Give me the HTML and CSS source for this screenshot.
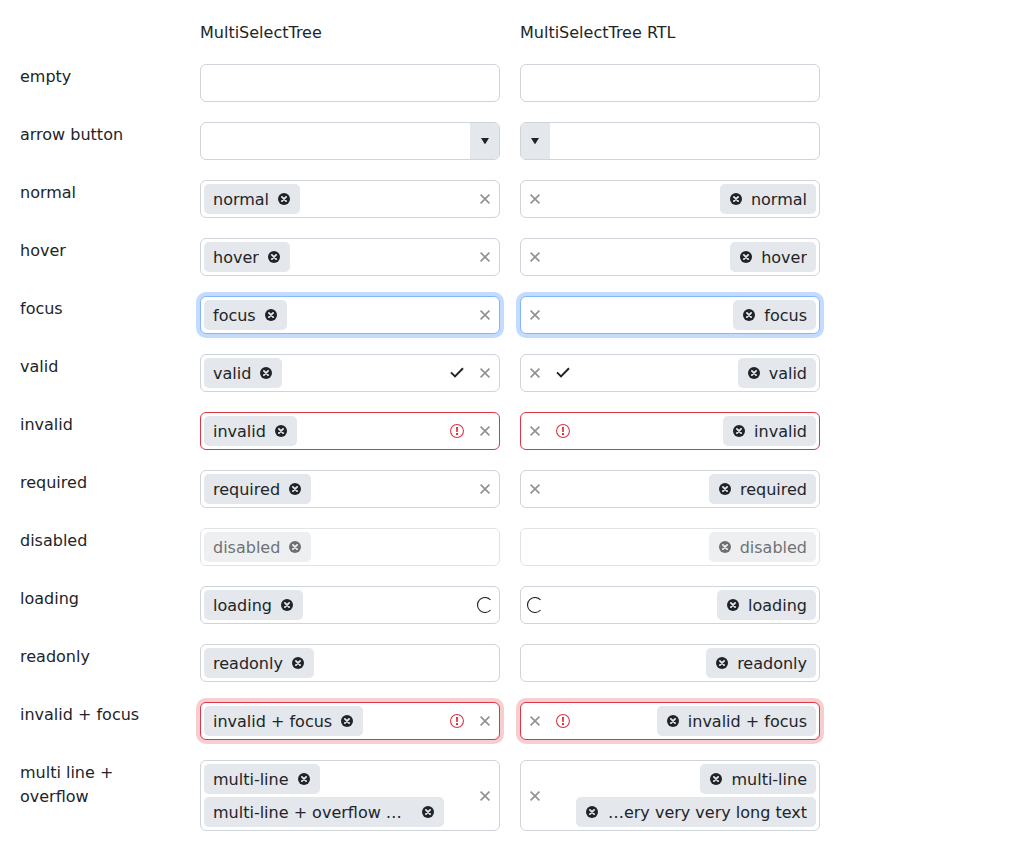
FILE: index.html
```html
<!DOCTYPE html>
<html lang="en">
<head>
<meta charset="utf-8">
<title>MultiSelectTree</title>
<link rel="stylesheet" href="styles.css">
</head>
<body>
<svg class="sprite" aria-hidden="true">
  <symbol id="remove" viewBox="0 0 12 12"><circle cx="6" cy="6" r="6" fill="currentColor"/><path d="M3.9 3.9l4.2 4.2M8.1 3.9l-4.2 4.2" stroke="#e4e7eb" stroke-width="1.9" stroke-linecap="round"/></symbol>
  <symbol id="clear" viewBox="0 0 10 10"><path d="M0.6 0.6l8.8 8.8M9.4 0.6l-8.8 8.8" stroke="currentColor" stroke-width="1.7"/></symbol>
  <symbol id="arrow" viewBox="0 0 8 6"><path d="M0 0h8L4.6 5.5q-.6.8-1.2 0z" fill="currentColor"/></symbol>
  <symbol id="check" viewBox="0 0 14 14"><path d="M1 6.4l4 4L13 2.2" fill="none" stroke="currentColor" stroke-width="2"/></symbol>
  <symbol id="alert" viewBox="0 0 14 14"><circle cx="7" cy="7" r="6.45" fill="none" stroke="currentColor" stroke-width="1.1"/><path d="M6 3h2l-.2 5H6.200zM6 9h2v2H6z" fill="currentColor"/></symbol>
  <symbol id="spinner" viewBox="0 0 16 16"><path d="M13.6 3A7.500 7.500 0 1 0 13.6 13" fill="none" stroke="currentColor" stroke-width="1.1"/></symbol>
</svg>
<main class="grid">
  <div class="heading heading-first">MultiSelectTree</div>
  <div class="heading">MultiSelectTree RTL</div>

  <label class="label" for="empty">empty</label>
  <div class="field"><div class="items"><input class="input" id="empty"></div></div>
  <div class="field" dir="rtl"><div class="items"><input class="input" aria-label="empty RTL"></div></div>

  <label class="label" for="arrow-button">arrow button</label>
  <div class="field"><div class="items"><input class="input" id="arrow-button"></div><button class="toggle" aria-label="Open"><svg class="icon-arrow"><use href="#arrow"/></svg></button></div>
  <div class="field" dir="rtl"><div class="items"><input class="input" aria-label="arrow button RTL"></div><button class="toggle" aria-label="Open"><svg class="icon-arrow"><use href="#arrow"/></svg></button></div>

  <label class="label" for="normal">normal</label>
  <div class="field"><div class="items"><span class="chip"><span class="chip-text">normal</span><button class="remove" aria-label="Remove"><svg class="icon-remove"><use href="#remove"/></svg></button></span><input class="input" id="normal"></div><button class="clear" aria-label="Clear"><svg class="icon-clear"><use href="#clear"/></svg></button></div>
  <div class="field" dir="rtl"><div class="items"><span class="chip"><span class="chip-text">normal</span><button class="remove" aria-label="Remove"><svg class="icon-remove"><use href="#remove"/></svg></button></span><input class="input" aria-label="normal RTL"></div><button class="clear" aria-label="Clear"><svg class="icon-clear"><use href="#clear"/></svg></button></div>

  <label class="label" for="hover">hover</label>
  <div class="field"><div class="items"><span class="chip"><span class="chip-text">hover</span><button class="remove" aria-label="Remove"><svg class="icon-remove"><use href="#remove"/></svg></button></span><input class="input" id="hover"></div><button class="clear" aria-label="Clear"><svg class="icon-clear"><use href="#clear"/></svg></button></div>
  <div class="field" dir="rtl"><div class="items"><span class="chip"><span class="chip-text">hover</span><button class="remove" aria-label="Remove"><svg class="icon-remove"><use href="#remove"/></svg></button></span><input class="input" aria-label="hover RTL"></div><button class="clear" aria-label="Clear"><svg class="icon-clear"><use href="#clear"/></svg></button></div>

  <label class="label" for="focus">focus</label>
  <div class="field focused"><div class="items"><span class="chip"><span class="chip-text">focus</span><button class="remove" aria-label="Remove"><svg class="icon-remove"><use href="#remove"/></svg></button></span><input class="input" id="focus"></div><button class="clear" aria-label="Clear"><svg class="icon-clear"><use href="#clear"/></svg></button></div>
  <div class="field focused" dir="rtl"><div class="items"><span class="chip"><span class="chip-text">focus</span><button class="remove" aria-label="Remove"><svg class="icon-remove"><use href="#remove"/></svg></button></span><input class="input" aria-label="focus RTL"></div><button class="clear" aria-label="Clear"><svg class="icon-clear"><use href="#clear"/></svg></button></div>

  <label class="label" for="valid">valid</label>
  <div class="field"><div class="items"><span class="chip"><span class="chip-text">valid</span><button class="remove" aria-label="Remove"><svg class="icon-remove"><use href="#remove"/></svg></button></span><input class="input" id="valid"></div><span class="status"><svg class="icon-status"><use href="#check"/></svg></span><button class="clear" aria-label="Clear"><svg class="icon-clear"><use href="#clear"/></svg></button></div>
  <div class="field" dir="rtl"><div class="items"><span class="chip"><span class="chip-text">valid</span><button class="remove" aria-label="Remove"><svg class="icon-remove"><use href="#remove"/></svg></button></span><input class="input" aria-label="valid RTL"></div><span class="status"><svg class="icon-status"><use href="#check"/></svg></span><button class="clear" aria-label="Clear"><svg class="icon-clear"><use href="#clear"/></svg></button></div>

  <label class="label" for="invalid">invalid</label>
  <div class="field invalid"><div class="items"><span class="chip"><span class="chip-text">invalid</span><button class="remove" aria-label="Remove"><svg class="icon-remove"><use href="#remove"/></svg></button></span><input class="input" id="invalid" aria-invalid="true"></div><span class="status"><svg class="icon-status"><use href="#alert"/></svg></span><button class="clear" aria-label="Clear"><svg class="icon-clear"><use href="#clear"/></svg></button></div>
  <div class="field invalid" dir="rtl"><div class="items"><span class="chip"><span class="chip-text">invalid</span><button class="remove" aria-label="Remove"><svg class="icon-remove"><use href="#remove"/></svg></button></span><input class="input" aria-label="invalid RTL" aria-invalid="true"></div><span class="status"><svg class="icon-status"><use href="#alert"/></svg></span><button class="clear" aria-label="Clear"><svg class="icon-clear"><use href="#clear"/></svg></button></div>

  <label class="label" for="required">required</label>
  <div class="field"><div class="items"><span class="chip"><span class="chip-text">required</span><button class="remove" aria-label="Remove"><svg class="icon-remove"><use href="#remove"/></svg></button></span><input class="input" id="required" required></div><button class="clear" aria-label="Clear"><svg class="icon-clear"><use href="#clear"/></svg></button></div>
  <div class="field" dir="rtl"><div class="items"><span class="chip"><span class="chip-text">required</span><button class="remove" aria-label="Remove"><svg class="icon-remove"><use href="#remove"/></svg></button></span><input class="input" aria-label="required RTL" required></div><button class="clear" aria-label="Clear"><svg class="icon-clear"><use href="#clear"/></svg></button></div>

  <label class="label" for="disabled">disabled</label>
  <div class="field disabled"><div class="items"><span class="chip"><span class="chip-text">disabled</span><button class="remove" aria-label="Remove" disabled><svg class="icon-remove"><use href="#remove"/></svg></button></span><input class="input" id="disabled" disabled></div></div>
  <div class="field disabled" dir="rtl"><div class="items"><span class="chip"><span class="chip-text">disabled</span><button class="remove" aria-label="Remove" disabled><svg class="icon-remove"><use href="#remove"/></svg></button></span><input class="input" aria-label="disabled RTL" disabled></div></div>

  <label class="label" for="loading">loading</label>
  <div class="field"><div class="items"><span class="chip"><span class="chip-text">loading</span><button class="remove" aria-label="Remove"><svg class="icon-remove"><use href="#remove"/></svg></button></span><input class="input" id="loading"></div><span class="status"><svg class="icon-spinner"><use href="#spinner"/></svg></span></div>
  <div class="field" dir="rtl"><div class="items"><span class="chip"><span class="chip-text">loading</span><button class="remove" aria-label="Remove"><svg class="icon-remove"><use href="#remove"/></svg></button></span><input class="input" aria-label="loading RTL"></div><span class="status"><svg class="icon-spinner"><use href="#spinner"/></svg></span></div>

  <label class="label" for="readonly">readonly</label>
  <div class="field"><div class="items"><span class="chip"><span class="chip-text">readonly</span><button class="remove" aria-label="Remove"><svg class="icon-remove"><use href="#remove"/></svg></button></span><input class="input" id="readonly" readonly></div></div>
  <div class="field" dir="rtl"><div class="items"><span class="chip"><span class="chip-text">readonly</span><button class="remove" aria-label="Remove"><svg class="icon-remove"><use href="#remove"/></svg></button></span><input class="input" aria-label="readonly RTL" readonly></div></div>

  <label class="label" for="invalid-focus">invalid + focus</label>
  <div class="field invalid focused"><div class="items"><span class="chip"><span class="chip-text">invalid + focus</span><button class="remove" aria-label="Remove"><svg class="icon-remove"><use href="#remove"/></svg></button></span><input class="input" id="invalid-focus" aria-invalid="true"></div><span class="status"><svg class="icon-status"><use href="#alert"/></svg></span><button class="clear" aria-label="Clear"><svg class="icon-clear"><use href="#clear"/></svg></button></div>
  <div class="field invalid focused" dir="rtl"><div class="items"><span class="chip"><span class="chip-text">invalid + focus</span><button class="remove" aria-label="Remove"><svg class="icon-remove"><use href="#remove"/></svg></button></span><input class="input" aria-label="invalid + focus RTL" aria-invalid="true"></div><span class="status"><svg class="icon-status"><use href="#alert"/></svg></span><button class="clear" aria-label="Clear"><svg class="icon-clear"><use href="#clear"/></svg></button></div>

  <label class="label" for="multi-line">multi line + overflow</label>
  <div class="field"><div class="items"><span class="chip"><span class="chip-text">multi-line</span><button class="remove" aria-label="Remove"><svg class="icon-remove"><use href="#remove"/></svg></button></span><span class="chip"><span class="chip-text">multi-line + overflow + very very very long text</span><button class="remove" aria-label="Remove"><svg class="icon-remove"><use href="#remove"/></svg></button></span><input class="input" id="multi-line"></div><button class="clear" aria-label="Clear"><svg class="icon-clear"><use href="#clear"/></svg></button></div>
  <div class="field" dir="rtl"><div class="items"><span class="chip"><span class="chip-text">multi-line</span><button class="remove" aria-label="Remove"><svg class="icon-remove"><use href="#remove"/></svg></button></span><span class="chip"><span class="chip-text">multi-line + overflow + very very very long text</span><button class="remove" aria-label="Remove"><svg class="icon-remove"><use href="#remove"/></svg></button></span><input class="input" aria-label="multi line + overflow RTL"></div><button class="clear" aria-label="Clear"><svg class="icon-clear"><use href="#clear"/></svg></button></div>
</main>
</body>
</html>
```
FILE: styles.css
```css
*, *::before, *::after { box-sizing: border-box; }

body {
  margin: 0;
  background: #fff;
  color: #212529;
  font: 16px/24px "DejaVu Sans", sans-serif;
}

button, input { font: inherit; color: inherit; }
svg { display: block; flex: none; }

.sprite { display: none; }

.grid {
  display: grid;
  grid-template-columns: 160px repeat(2, minmax(0, 300px));
  grid-template-rows: 24px;
  gap: 20px;
  padding: 20px;
}

.heading, .label { padding-top: 1px; }
.heading-first { grid-column-start: 2; }

.field {
  display: flex;
  min-height: 38px;
  border: 1px solid #ced4da;
  border-radius: 6px;
  background: #fff;
  overflow: hidden;
}

.focused {
  border-color: #86b7fe;
  box-shadow: 0 0 0 4px #c2dbff;
}

.invalid { border-color: #dc3545; }
.invalid.focused { box-shadow: 0 0 0 4px #f6cdd1; }
.disabled { opacity: 0.65; }

.items {
  display: flex;
  flex: 1;
  flex-wrap: wrap;
  align-items: center;
  gap: 3px;
  min-width: 0;
  padding: 3px;
}

.input {
  flex: 1 1 0;
  min-width: 0;
  width: 0;
  height: 30px;
  padding: 0;
  border: 0;
  outline: 0;
  background: transparent;
}

.chip {
  display: flex;
  align-items: center;
  gap: 9px;
  max-width: 240px;
  height: 30px;
  padding-inline: 9px 10px;
  border-radius: 5px;
  background: #e4e7eb;
}

.chip-text {
  min-width: 0;
  padding-top: 2px;
  overflow: hidden;
  text-overflow: ellipsis;
  white-space: nowrap;
}

.remove, .clear, .toggle {
  display: flex;
  flex: none;
  align-items: center;
  justify-content: center;
  padding: 0;
  border: 0;
  background: transparent;
}

.clear, .status { width: 28px; }
.clear { color: #909294; }

.toggle {
  width: 29px;
  border-inline-start: 1px solid #e4e7eb;
  background: #e4e7eb;
}

.status {
  display: flex;
  flex: none;
  align-items: center;
  justify-content: center;
}

.invalid .status { color: #dc3545; }

.icon-remove { width: 12px; height: 12px; }
.icon-clear { width: 10px; height: 10px; }
.icon-arrow { width: 8px; height: 6px; }
.icon-status { width: 14px; height: 14px; }
.icon-spinner { width: 16px; height: 16px; }
```
